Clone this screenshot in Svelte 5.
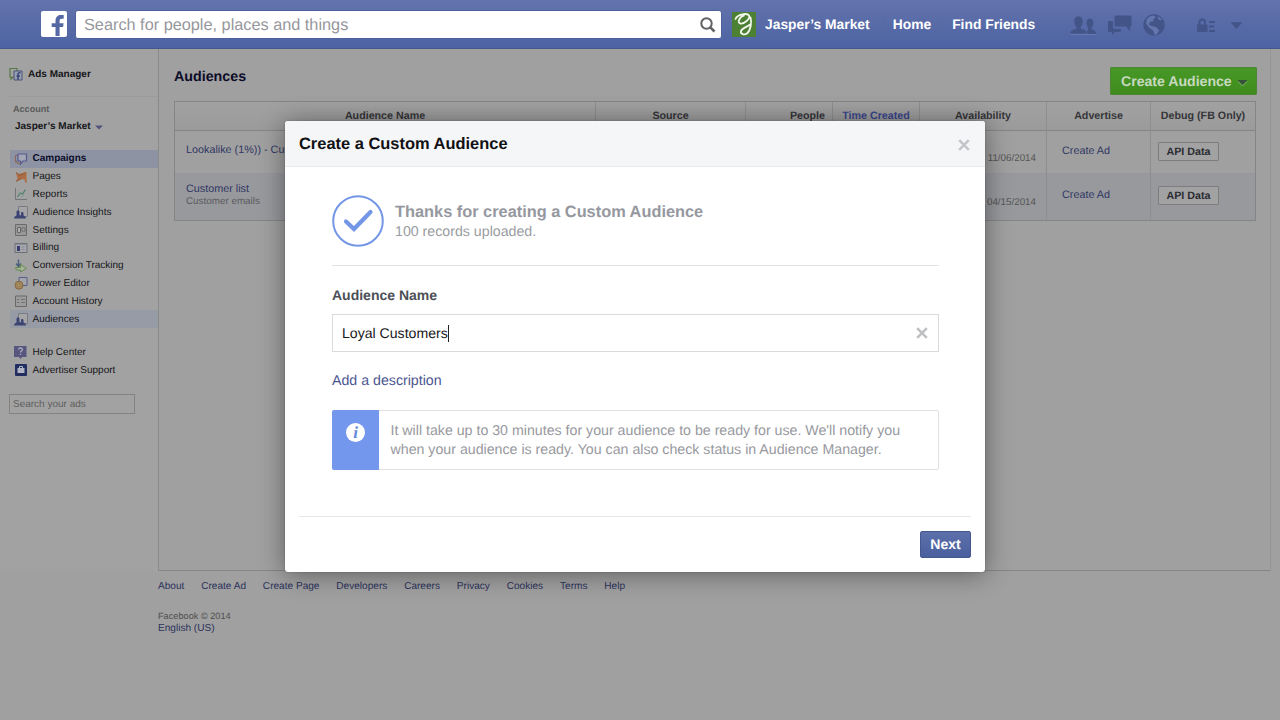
<script>
  const nav = ['Campaigns', 'Pages', 'Reports', 'Audience Insights', 'Settings', 'Billing', 'Conversion Tracking', 'Power Editor', 'Account History', 'Audiences'];
  const help = ['Help Center', 'Advertiser Support'];
  const links = ['About', 'Create Ad', 'Create Page', 'Developers', 'Careers', 'Privacy', 'Cookies', 'Terms', 'Help'];
  const rows = [
    { name: 'Lookalike (1%)) - Cus', sub: '', date: '11/06/2014' },
    { name: 'Customer list', sub: 'Customer emails', date: '04/15/2014' }
  ];
</script>

{#snippet icon(name)}
  <svg class="ico" width="14" height="14" viewBox="0 0 14 14" fill="none">
    {#if name === 'Campaigns'}
      <path d="M1.500 3.500H4M1.500 3.500V10L3.500 8.500" stroke="#8a6455" />
      <path d="M4 2h8.500v7H9l-2.500 3V9H4z" stroke="#555b91" stroke-width="1.200" fill="#a1a5b4" />
      <path d="M2 9l1.500 2.500L7 11" stroke="#8a6455" />
    {:else if name === 'Pages'}
      <path d="M2 2.500l3 1.500 7.500-2.500v7l.5 4h-2L10.500 9 7 9.500l-5 2 1.500-3z" fill="#ad6d44" />
      <path d="M2 2.500l4 3 5-2M2 11.500l5-3" stroke="#8c5535" stroke-width=".8" />
    {:else if name === 'Reports'}
      <path d="M1.500 1v11.500H13" stroke="#71757a" />
      <path d="M3.500 10l3-4 2 1 3-4.500" stroke="#4b8067" stroke-width="1.200" />
      <path d="M4 6h3M7 10l3-2" stroke="#7d9b8d" />
    {:else if name === 'Audience Insights' || name === 'Audiences'}
      <path d="M4.500 1.500h9v10h-9z" stroke="#777b82" fill="#a5a5a7" />
      <path d="M0 13.500c0-2 1.500-2.500 2.500-3V6.500c0-1.500 3-1.500 3 0V10l1.500.5V8c0-1.500 2.500-1.500 2.500 0v2.500c1.500.5 2.500 1.500 2.500 3z" fill="#3c4473" />
    {:else if name === 'Settings'}
      <path d="M1.500 1.500h11v11h-11z" stroke="#6b6b6b" fill="#989898" />
      <path d="M3.500 4.500h3v5h-3zM8 5h3v3H8z" stroke="#686868" fill="#b0b0b0" />
    {:else if name === 'Billing'}
      <path d="M1 2.500h12v9H1z" stroke="#6a6e77" fill="#a5a7ac" />
      <path d="M2 3h10" stroke="#717785" />
      <path d="M3 5h3v5H3z" fill="#363b70" /><path d="M7.500 6h3M7.500 8.500h3" stroke="#878b95" />
    {:else if name === 'Conversion Tracking'}
      <path d="M4.500 .5v6M2 4.500l2.500 3L7 4.500" stroke="#4b607d" stroke-width="1.500" />
      <path d="M1.500 8.500h5V5.500l6 4-6 3.500v-2h-4z" stroke="#648a50" fill="#a5b39b" />
    {:else if name === 'Power Editor'}
      <path d="M5 1.500h8v8H5z" stroke="#575d8c" fill="#a4a5aa" />
      <circle cx="5" cy="9.200" r="4" fill="#a4875a" stroke="#795f35" stroke-width=".8" /><circle cx="5" cy="9.200" r="1.300" fill="#bca97e" stroke="#84693d" stroke-width=".6" />
    {:else if name === 'Account History'}
      <path d="M1.500 2h11v10.500h-11z" stroke="#696969" fill="#9c9c9c" />
      <path d="M3 5.500h2M3 8.500h2M7 5.500h4M7 8.500h4" stroke="#737373" />
    {:else if name === 'Help Center'}
      <path d="M0 1h12.500v11H8l-1.500 2L5 12H0z" fill="#56567f" />
      <path d="M4.500 4.500c.2-2 4-2 4 0 0 1.500-2 1.300-2 3M6.500 8.800v1.200" stroke="#a9a9bf" stroke-width="1.300" />
    {:else}
      <rect x="1" y="1" width="12" height="12" rx="1" fill="#222d60" />
      <path d="M3.500 5h7v5h-7z" fill="#b2b5c4" /><path d="M5.500 5V3.500h3V5" stroke="#b2b5c4" />
    {/if}
  </svg>
{/snippet}

<div class="page">
  <header>
    <svg class="logo" width="26" height="26" viewBox="0 0 26 26">
      <rect width="26" height="26" rx="2" fill="#fff" />
      <path d="M14.500 25V16h-3.800v-3.800h3.800V10c0-4 2.300-5.900 5.700-5.900h2.500v3.700h-1.900c-1.700 0-2.200.8-2.200 2.300v2.100h4L22.100 16h-3.500v9z" fill="#5468a4" />
    </svg>
    <div class="search">
      <span>Search for people, places and things</span>
      <svg width="18" height="18" viewBox="0 0 18 18" fill="none" stroke="#626266"><circle cx="7.500" cy="7.500" r="5.200" stroke-width="2" /><path d="M11.300 11.300l4.200 4.200" stroke-width="2.600" /></svg>
    </div>
    <svg class="jm" width="24" height="25" viewBox="0 0 24 25" fill="none">
      <rect width="24" height="25" fill="#4c8133" />
      <path d="M3.500 7C5.500 2.500 15 .5 17 3.500c1.500 3-4.500 8.500-8.500 8-3.500-.5-1.500-6.500 3.500-8M18.500 5.500c1.500 5 0 12.500-3 15.500-3 2.800-7.500 1-6.500-2 1-2.800 6-4 10-7" stroke="#f4f8ef" stroke-width="1.800" stroke-linecap="round" />
    </svg>
    <nav><b>Jasper’s Market</b><i></i><b>Home</b><i></i><b>Find Friends</b></nav>
    <div class="tools">
      <svg width="26" height="22" viewBox="0 0 26 22" fill="#435489">
        <path d="M16 20h10c0-3-1.500-3.800-4.500-4.800V14c3-3 2.500-9.500-1.500-9.500-3.500 0-4 4-3 7l1 2.500v2z" />
        <path d="M0 20c0-3.500 2.500-4.500 6-5.500V13C2.500 9 3.500 2 8.500 2s6 7 2.500 11v1.500c4 1 6 2 6 5.500z" stroke="#5b6da7" stroke-width=".6" />
        <path d="M0 20.500h26" stroke="#6f80b3" stroke-width=".7" />
      </svg>
      <svg width="25" height="22" viewBox="0 0 25 22" fill="#435489">
        <path d="M1 7h5v6q0 2 2 2h6v2q0 1-1 1H8l-3 3v-3H2q-1 0-1-1z" />
        <path d="M9 1.500h14.500q1 0 1 1v9q0 1-1 1H23V17l-4-4.500H9q-1.500 0-1.500-1.500V3q0-1.500 1.500-1.500z" />
      </svg>
      <svg width="22" height="22" viewBox="0 0 22 22"><circle cx="11" cy="11" r="10.700" fill="#435489" /><path d="M4 4.500Q7 1.500 11 1.500l2 2-3 1.500 1 2-4 1-1 3 3 1 4 1 3 3-1 3-3 2.500-2-5-4-3-3-4zM15 2l4 3.500-2 1-2-2z" fill="#6275ac" /></svg>
      <svg class="lock" width="19" height="15" viewBox="0 0 19 15" fill="#435489"><path d="M0 6.500h10.500V14H0z" /><path d="M2.400 7V4.500c0-4 5.600-4 5.600 0V7" fill="none" stroke="#435489" stroke-width="2" /><path d="M12 3h6v2h-6zM12 7.500h5v2h-5zM12 12h6v2h-6z" /></svg>
      <svg class="caret" width="13" height="7" viewBox="0 0 13 7"><path d="M.5 .3h12L6.500 6.700z" fill="#435489" /></svg>
    </div>
  </header>

  <div class="body">
    <aside>
      <div class="ads">
        <svg width="14" height="14" viewBox="0 0 14 14" fill="none"><path d="M1 1.500h7V10H4l-2 2V10H1z" stroke="#587847" stroke-width="1.200" /><path d="M5 4h8v9H5z" fill="#959fb4" stroke="#4c5272" /><path d="M9 13V7.500c0-1.500 1-2 2.500-2M7.500 9H11" stroke="#3b4674" stroke-width="1.500" /></svg>
        <b>Ads Manager</b>
      </div>
      <div class="acct">Account</div>
      <div class="who">Jasper’s Market <svg width="8" height="5" viewBox="0 0 8 5"><path d="M0 .5h8L4 4.500z" fill="#50547c" /></svg></div>
      <ul>
        {#each nav as n}
          <li class:current={n === 'Campaigns'} class:soft={n === 'Audiences'}>{@render icon(n)}<span>{n}</span></li>
        {/each}
      </ul>
      <ul class="help">
        {#each help as n}<li>{@render icon(n)}<span>{n}</span></li>{/each}
      </ul>
      <div class="find">Search your ads</div>
    </aside>
    <main>
      <div class="top">
        <h1>Audiences</h1>
        <div class="create">Create Audience <svg width="11" height="8" viewBox="0 0 11 8"><path d="M.5 1h10l-5 5z" fill="#38513a" /><path d="M1 2.500l4.500 4.500L10 2.500" stroke="#8eb67b" stroke-width=".8" fill="none" /></svg></div>
      </div>
      <div class="table">
        <div class="row head">
          <div>Audience Name</div><div>Source</div><div class="right">People</div><div class="sorted">Time Created</div><div>Availability</div><div>Advertise</div><div>Debug (FB Only)</div>
        </div>
        {#each rows as r, k}
          <div class="row" class:alt={k === 1}>
            <div class="name"><span>{r.name}</span>{#if r.sub}<small>{r.sub}</small>{/if}</div>
            <div></div><div></div><div></div>
            <div class="date">{r.date}</div>
            <div class="ad">Create Ad</div>
            <div class="api"><b>API Data</b></div>
          </div>
        {/each}
      </div>
    </main>
  </div>

  <footer>
    <div class="links">{#each links as l}<span>{l}</span>{/each}</div>
    <div class="copy">Facebook © 2014</div>
    <div class="lang">English (US)</div>
  </footer>

  <div class="modal">
    <div class="title"><h2>Create a Custom Audience</h2>
      <svg width="12" height="12" viewBox="0 0 12 12"><path d="M1.200 1.200l9.600 9.600M10.800 1.200l-9.600 9.600" stroke="#c3c4c8" stroke-width="2.400" /></svg>
    </div>
    <div class="content">
      <div class="thanks">
        <svg width="52" height="52" viewBox="0 0 52 52" fill="none" stroke="#7496e6"><circle cx="26" cy="26" r="24.800" stroke-width="2" /><path d="M14 26.500l8 7.500 16.500-17" stroke-width="4.200" stroke-linecap="round" /></svg>
        <div><h3>Thanks for creating a Custom Audience</h3><p>100 records uploaded.</p></div>
      </div>
      <div class="label">Audience Name</div>
      <div class="input"><span>Loyal Customers</span>
        <svg width="12" height="12" viewBox="0 0 12 12"><path d="M1.200 1.200l9.600 9.600M10.800 1.200l-9.600 9.600" stroke="#bfc0c4" stroke-width="2.600" /></svg>
      </div>
      <div class="desc">Add a description</div>
      <div class="info">
        <div class="blue"><div class="dot">i</div></div>
        <p>It will take up to 30 minutes for your audience to be ready for use. We'll notify you<br />when your audience is ready. You can also check status in Audience Manager.</p>
      </div>
    </div>
    <div class="actions"><div class="next">Next</div></div>
  </div>
</div>

<style>
  :global(body) { margin: 0; }
  .page { position: relative; width: 1280px; height: 720px; overflow: hidden; background: #a0a0a0; font: 10px/12px "Liberation Sans", Arial, sans-serif; text-rendering: geometricPrecision; color: #16161a; white-space: nowrap; }
  .page :is(div, header, main, aside, li) { box-sizing: border-box; }
  h1, h2, h3, p, ul { margin: 0; padding: 0; list-style: none; }
  svg { display: block; flex: none; }
  header { height: 49px; padding-left: 41px; display: flex; align-items: center; background: linear-gradient(#6373ac, #4d63a3); border-bottom: 1px solid #46578a; }
  .search { width: 647px; height: 29px; margin-left: 8px; padding: 2px 4px 0 8px; display: flex; align-items: center; justify-content: space-between; background: #fff; border: 1px solid #50629c; border-radius: 3px; color: #96979c; font-size: 16.300px; }
  .jm { margin-left: 10px; }
  nav { display: flex; align-items: center; margin-left: 9px; color: #fff; font-size: 13.850px; }
  nav i { width: 1px; height: 16px; margin: 0 9px 0 13px; background: #566aa3; }
  nav i:last-of-type { margin: 0 9px 0 11px; }
  .tools { display: flex; align-items: center; margin-left: 35px; padding-top: 2px; }
  .tools svg + svg { margin-left: 11px; }
  .tools .lock { margin-left: 32px !important; }
  .tools .caret { margin-left: 14px !important; }
  .body { display: flex; width: 1271px; height: 522px; border-right: 1px solid #949494; }
  aside { flex: none; width: 159px; border-right: 1px solid #8a8a8a; background: #a2a2a2; }
  .ads { height: 48px; margin: 0 0 0 9px; padding-top: 3px; display: flex; align-items: center; gap: 5px; border-bottom: 1px solid #9b9b9b; }
  .ads b { padding-top: 1px; }
  .acct { padding: 6px 0 0 13px; font-weight: bold; font-size: 9.100px; color: #5c5c5c; }
  .who { display: flex; align-items: center; gap: 4px; padding: 6px 0 0 15px; font-weight: bold; }
  ul { margin: 17px 0 0 10px; }
  li { height: 17.800px; display: flex; align-items: center; gap: 4.500px; padding-left: 4px; }
  li span { padding-top: 1px; }
  li.current { background: #8e93a3; font-weight: bold; color: #0b0d2b; }
  li.soft { background: #979ba6; }
  ul.help { margin-top: 15.500px; }
  .find { width: 126px; height: 20px; margin: 15px 0 0 9px; padding: 4px 3px; border: 1px solid #838383; color: #5e5e5e; }
  main { flex: 1; padding: 0 14px 0 15px; border-bottom: 1px solid #858585; }
  .top { height: 52px; display: flex; justify-content: space-between; padding: 18px 0 0; }
  h1 { margin-top: 1px; font-size: 14.250px; line-height: 18px; color: #0c0c28; }
  .create { width: 147px; height: 28px; margin-right: -1px; display: flex; align-items: center; gap: 5px; padding: 0 0 0 10px; border: 1px solid #4c8534; border-radius: 1px; background: linear-gradient(#479827, #3f8c1d); color: #c7d9bf; font-size: 14.100px; font-weight: bold; }
  .create svg { margin-top: 4px; }
  .table { width: 1082px; border: 1px solid #858585; }
  .row { height: 42px; display: grid; grid-template-columns: 420px 150px 87px 87px 127px 104px 105px; }
  .row > div { border-left: 1px solid #8e8e8e; }
  .row > div:first-child { border-left: 0; }
  .head { height: 29px; border-bottom: 1px solid #858585; background: linear-gradient(#a1a1a1, #9b9b9b); font-size: 10.700px; font-weight: bold; text-align: center; color: #353538; line-height: 29px; }
  .head .right { text-align: right; padding-right: 7px; }
  .head .sorted { color: #3a468c; }
  .alt { height: 47px; background: #98999d; }
  .name { padding: 13px 0 0 11px; font-size: 10.800px; color: #303763; }
  .alt .name { padding-top: 10px; }
  .name small { display: block; margin-top: 1px; font-size: 9.850px; color: #5a5a5e; }
  .date { padding: 22px 10px 0 0; text-align: right; font-size: 9.800px; color: #555; }
  .alt .date { padding-top: 24px; }
  .ad { padding: 14px 0 0 15px; font-size: 10.800px; color: #303763; }
  .alt .ad { padding-top: 16px; }
  .api { padding: 11px 0 0 7px; }
  .alt .api { padding-top: 13px; }
  .api b { display: block; width: 61px; height: 19px; box-sizing: border-box; text-align: center; line-height: 18px; font-size: 10.700px; color: #2b2c32; border: 1px solid #7d7d7d; border-radius: 1px; background: #a2a2a2; }
  footer { padding: 10px 0 0 158px; color: #2c335c; font-size: 10.080px; }
  .links { display: flex; gap: 16.850px; }
  .copy { margin-top: 17px; font-size: 9.200px; color: #4d4d4d; }
  .lang { margin-top: 1px; }
  .modal { position: absolute; left: 285px; top: 121px; width: 700px; height: 451px; background: #fff; border-radius: 3px; box-shadow: 0 2px 26px rgba(0, 0, 0, .42), 0 0 2px rgba(0, 0, 0, .25); display: flex; flex-direction: column; }
  .title { height: 46px; padding: 1px 15px 0 14px; display: flex; align-items: center; justify-content: space-between; background: #f5f6f8; border-bottom: 1px solid #e9eaed; border-radius: 3px 3px 0 0; }
  .title svg { margin-top: 2px; }
  h2 { font-size: 16.450px; line-height: 20px; color: #111114; }
  .content { flex: 1; padding: 28px 46px 0 47px; font-size: 14.200px; line-height: 19px; }
  .thanks { height: 71px; display: flex; gap: 11px; border-bottom: 1px solid #e3e3e5; }
  .thanks > div { padding-top: 7px; color: #9a9ca1; }
  .thanks p { padding-top: 1px; }
  h3 { font-size: 16.350px; line-height: 20px; color: #9698a0; }
  .label { margin-top: 20px; font-weight: bold; font-size: 14px; color: #4c4f58; }
  .input { height: 38px; margin-top: 9px; border: 1px solid #dadbde; padding: 0 10px 0 9px; display: flex; align-items: center; justify-content: space-between; color: #17171a; font-size: 14.100px; }
  .input span { border-right: 1px solid #222; line-height: 17px; }
  .desc { margin-top: 20px; color: #4b5691; }
  .info { height: 60px; margin-top: 19px; display: flex; border: 1px solid #dfe0e4; border-radius: 2px; color: #97999e; }
  .blue { width: 47px; margin: -1px 0 -1px -1px; display: flex; justify-content: center; padding-top: 13px; background: #7397ec; border-radius: 2px 0 0 2px; }
  .dot { width: 19px; height: 19px; border-radius: 50%; background: #fff; color: #6288db; font: italic bold 17px/19px "Liberation Serif", serif; text-align: center; }
  .info p { padding: 11px 0 0 11.500px; }
  .actions { height: 56px; margin: 0 14px; padding-top: 14px; border-top: 1px solid #e6e7ea; display: flex; justify-content: flex-end; }
  .next { width: 51px; height: 27px; border: 1px solid #46588f; border-radius: 2px; background: linear-gradient(#5c70aa, #495f9e); color: #fff; font-size: 14px; font-weight: bold; line-height: 25px; text-align: center; }
</style>
